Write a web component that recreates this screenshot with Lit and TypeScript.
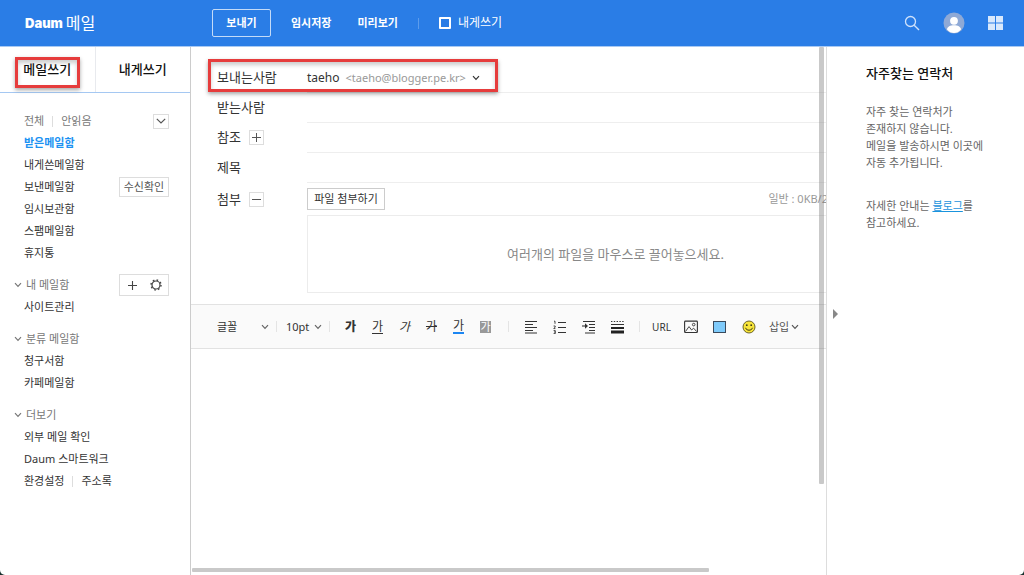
import { LitElement, html, css, svg } from "lit";
import { customElement, state } from "lit/decorators.js";

const chevron = html`<svg class="chev" width="8" height="6" viewBox="0 0 8 6" aria-hidden="true">
  <path d="M1 1.2 4 4.4 7 1.2" fill="none" stroke="currentColor" stroke-width="1.2" />
</svg>`;

const wideChevron = html`<svg width="10" height="6" viewBox="0 0 10 6" aria-hidden="true">
  <path d="M.8.8 5 5 9.200.8" fill="none" stroke="currentColor" stroke-width="1.2" />
</svg>`;

const icon = (body: unknown, w = 14, h = 14) =>
  html`<svg width=${w} height=${h} viewBox="0 0 ${w} ${h}" aria-hidden="true">${body}</svg>`;

const alignIcon = icon(svg`<path d="M1 1.5h12M1 4.5h8M1 7.5h12M1 10.5h8M1 13h12" stroke="#333" stroke-width="1.1"/>`);
const listIcon = icon(svg`<path d="M5 2.5h8M5 7.5h8M5 12.5h8" stroke="#333" stroke-width="1.1"/>
  <path d="M1 1.2h1v2.6M.6 6h1.6v1L.8 8.6h1.6M.6 10.6h1.7v3H.6M1 12h1.2" fill="none" stroke="#333" stroke-width=".9"/>`);
const indentIcon = icon(svg`<path d="M1 1.5h12M7 4.5h6M7 7.5h6M7 10.5h6M3 13h10" stroke="#333" stroke-width="1.1"/>
  <path d="M0 6h4" stroke="#333" stroke-width="1.1"/><path d="M3 3.2 6 6 3 8.8z" fill="#333"/>`);
const ruleIcon = icon(svg`<path d="M1 1.5h13" stroke="#333" stroke-width="1" stroke-dasharray="1.4 1.4"/>
  <path d="M1 4.5h13" stroke="#333" stroke-width="1"/><path d="M1 8h13" stroke="#222" stroke-width="2"/>
  <path d="M1 12h13" stroke="#222" stroke-width="3"/>`, 15, 14);
const imageIcon = icon(svg`<rect x=".6" y="1.1" width="12.8" height="11.4" rx=".8" fill="none" stroke="#333" stroke-width="1.1"/>
  <circle cx="9.7" cy="4.6" r="1.3" fill="none" stroke="#333" stroke-width=".9"/>
  <path d="M1.5 11.5 5 6.6 7.6 10 9.6 8.2 12.6 11.5" fill="none" stroke="#333" stroke-width=".9"/>`);
const boxIcon = icon(svg`<rect x=".5" y="1.5" width="12" height="11" fill="#7fcbfb" stroke="#3a4a5c"/>`, 13, 14);
const smileIcon = icon(svg`<circle cx="7" cy="7" r="6" fill="#f8e53a" stroke="#5b5520" stroke-width=".9"/>
  <circle cx="4.8" cy="5.2" r=".9" fill="#3d3a16"/><circle cx="9.2" cy="5.2" r=".9" fill="#3d3a16"/>
  <path d="M3.5 7.8c1 3.2 6 3.2 7 0" fill="none" stroke="#3d3a16" stroke-width="1"/>`);

@customElement("app-root")
export class AppRoot extends LitElement {
  @state() private toMe = false;

  static styles = css`
    :host {
      display: block;
      height: 100vh;
      background: #16302c;
      color: #333;
      font: 11px/22px "Noto Sans", "Noto Sans CJK KR", sans-serif;
    }
    * { box-sizing: border-box; }
    button, input, select {
      font: inherit;
      color: inherit;
      background: none;
      border: 0;
      padding: 0;
      margin: 0;
      border-radius: 0;
    }
    button { cursor: pointer; white-space: nowrap; }
    a { color: inherit; text-decoration: none; }
    svg { display: block; flex: none; }
    .page {
      height: 100%;
      display: flex;
      flex-direction: column;
      background: #fff;
      border-radius: 0 0 5px 5px;
      overflow: hidden;
    }
    .top {
      flex: none;
      height: 47px;
      display: flex;
      align-items: center;
      background: #2a7de6;
      border-bottom: 1px solid #a8c9f3;
      color: #fff;
    }
    .brand {
      flex: none;
      width: 212px;
      padding-left: 25px;
      display: flex;
      align-items: center;
      gap: 3px;
      font-size: 16px;
    }
    .logo { font: 900 13px/22px Inter, sans-serif; }
    .actions { display: flex; align-items: center; gap: 20px; font-weight: 700; flex: 1; }
    .send { width: 59px; height: 28px; border: 1px solid #c4dbf8; border-radius: 2px; }
    .preview { margin-left: 6px; }
    .bar { width: 1px; height: 11px; background: #5c9cec; flex: none; }
    .tome { display: flex; align-items: center; gap: 7px; font-weight: 400; font-size: 12px; }
    .tome input {
      appearance: none;
      width: 12px;
      height: 12px;
      border: 2px solid #fff;
      border-radius: 1px;
    }
    .tome input:checked { background: #bcd6f8; }
    .tools { display: flex; align-items: center; gap: 23px; padding-right: 21px; }
    .body { flex: 1; min-height: 0; display: flex; }

    .side { flex: none; width: 191px; border-right: 1px solid #ccc; }
    .tabs { display: flex; height: 46px; border-bottom: 1px solid #a5c8f2; }
    .tab {
      position: relative;
      flex: 1;
      padding-bottom: 2px;
      font-size: 13px;
      font-weight: 500;
      color: #111;
    }
    .tab + .tab { border-left: 1px solid #e8eaee; }
    .mark {
      position: absolute;
      border: 3px solid #e63c3c;
      box-shadow: 0 2px 4px rgba(0, 0, 0, 0.35), inset 0 3px 4px rgba(0, 0, 0, 0.2);
      pointer-events: none;
    }
    .mark-tab { inset: 10px 15px 4px; }
    .mark-from { inset: -4px auto 1px -9px; width: 290px; }
    .folders { padding: 17px 21px 0 24px; }
    .row { display: flex; align-items: center; height: 22px; }
    .row .bar { background: #ddd; margin: 0 8px; }
    .push { margin-left: auto; }
    .muted { color: #777; }
    .on { color: #1c92f2; font-weight: 700; }
    .group { margin-top: 10px; }
    .head { margin-left: -10px; gap: 4px; color: #777; }
    .box { border: 1px solid #ddd; display: flex; align-items: center; justify-content: center; color: #555; }
    .more { width: 16px; height: 15px; }
    .check { width: 50px; height: 20px; }
    .pair { width: 50px; height: 22px; justify-content: space-around; }
    .pair button { flex: 1; display: flex; justify-content: center; }

    .main { position: relative; flex: 1; min-width: 0; overflow: hidden; }
    .form { padding: 16px 0 11px 26px; font-size: 13px; }
    .field { position: relative; display: flex; height: 30px; }
    .label { flex: none; width: 90px; height: 28px; display: flex; align-items: center; gap: 8px; }
    .entry { flex: 1; min-width: 0; display: flex; align-items: center; border-bottom: 1px solid #eee; }
    .entry input { width: 100%; height: 28px; outline: none; }
    .from { display: flex; align-items: center; gap: 6px; font-size: 12px; }
    .addr { color: #999; font-size: 11px; }
    .attach { height: 32px; }
    .attach .label { height: 32px; }
    .attach .entry { border: 0; white-space: nowrap; }
    .file { flex: none; width: 78px; height: 22px; border: 1px solid #ccc; line-height: 18px; font-size: 11px; }
    .size { margin-left: auto; margin-right: -2px; color: #999; font-size: 11px; }
    .drop {
      margin-left: 90px;
      margin-right: -98px;
      height: 78px;
      border: 1px solid #ececec;
      display: flex;
      align-items: center;
      justify-content: center;
      color: #888;
      font-size: 13px;
    }
    .sq { width: 15px; height: 15px; }
    .bar-edit {
      display: flex;
      align-items: center;
      height: 45px;
      padding-left: 26px;
      background: #fafafa;
      border-top: 1px solid #e2e2e2;
      border-bottom: 1px solid #e2e2e2;
      color: #333;
    }
    .bar-edit .bar { background: #e4e4e4; margin: 0 7px; }
    .pick { position: relative; display: flex; align-items: center; }
    .pick select { appearance: none; width: 100%; outline: none; }
    .pick .chev { position: absolute; right: 0; pointer-events: none; color: #666; }
    .font { width: 52px; }
    .pt { width: 36px; margin-left: 2px; }
    .marks { display: flex; margin-right: 2px; }
    .t { flex: none; width: 27px; height: 24px; display: flex; align-items: center; justify-content: center; }
    .w { width: 29px; }
    .g { font-size: 12px; line-height: 13px; }
    .bold { font-weight: 900; }
    .under { border-bottom: 1px solid #333; }
    .ital { font-style: italic; }
    .strike { text-decoration: line-through; }
    .tint { border-bottom: 2px solid #1c86f2; }
    .fill { background: #999; color: #fff; font-size: 11px; line-height: 12px; }
    .url { font: 10px/22px "Noto Sans", sans-serif; }
    .insert { display: flex; align-items: center; gap: 2px; margin-left: 6px; color: #555; }
    .vbar, .hbar { position: absolute; background: rgba(120, 120, 120, 0.4); border-radius: 1px; }
    .vbar { top: 0; right: 2px; width: 5px; bottom: 91px; }
    .hbar { left: 1px; right: 117px; bottom: 3px; height: 4px; }

    .contacts {
      position: relative;
      flex: none;
      width: 198px;
      padding: 15px 30px 0 39px;
      border-left: 1px solid #ddd;
      line-height: 17px;
      color: #666;
    }
    .contacts h2 { margin: 0 0 19px; font-size: 13px; line-height: 22px; font-weight: 500; color: #111; }
    .contacts p { margin: 0 0 26px; white-space: nowrap; }
    .contacts a { color: #1a94dd; text-decoration: underline; }
    .fold { position: absolute; left: 6px; top: 262px; }
  `;

  render() {
    return html`<div class="page">
      <header class="top">
        <div class="brand"><span class="logo">Daum</span><span>메일</span></div>
        <div class="actions">
          <button class="send">보내기</button>
          <button>임시저장</button>
          <button class="preview">미리보기</button>
          <span class="bar"></span>
          <label class="tome"><input type="checkbox" .checked=${this.toMe}
            @change=${() => (this.toMe = !this.toMe)} />내게쓰기</label>
        </div>
        <div class="tools">
          <button aria-label="검색">${icon(svg`<circle cx="6.5" cy="6.5" r="5" fill="none" stroke="#cfe2fb" stroke-width="1.3"/>
            <path d="M10.2 10.2 15 15" stroke="#cfe2fb" stroke-width="1.4"/>`, 16, 16)}</button>
          <button aria-label="내 계정">${icon(svg`<circle cx="11" cy="11" r="10.5" fill="#8ea9d6"/>
            <circle cx="11" cy="8.8" r="3.9" fill="#fff"/>
            <path d="M4 17.500c0-5.800 14-5.800 14 0-3.600 4.800-10.400 4.800-14 0z" fill="#fff"/>`, 22, 22)}</button>
          <button aria-label="서비스">${icon(svg`<path d="M0 0h7v6.500H0zM8 0h7v6.500H8zM0 7.500h7V14H0zM8 7.500h7V14H8z" fill="#d8e8fc"/>`, 15, 14)}</button>
        </div>
      </header>

      <div class="body">
        <aside class="side">
          <div class="tabs">
            <button class="tab">메일쓰기<span class="mark mark-tab"></span></button>
            <button class="tab">내게쓰기</button>
          </div>
          <nav class="folders">
            <div class="row muted"><a href="#">전체</a><span class="bar"></span><a href="#">안읽음</a>
              <button class="box more push" aria-label="더보기">${wideChevron}</button></div>
            <div class="row"><a class="on" href="#">받은메일함</a></div>
            <div class="row"><a href="#">내게쓴메일함</a></div>
            <div class="row"><a href="#">보낸메일함</a><button class="box check push">수신확인</button></div>
            <div class="row"><a href="#">임시보관함</a></div>
            <div class="row"><a href="#">스팸메일함</a></div>
            <div class="row"><a href="#">휴지통</a></div>
            <div class="group">
              <div class="row head">${chevron}<span>내 메일함</span>
                <span class="box pair push">
                  <button aria-label="추가">${icon(svg`<path d="M5.500 1v9M1 5.500h9" stroke="#444" stroke-width="1.1"/>`, 11, 11)}</button>
                  <button aria-label="설정">${icon(svg`<circle cx="6" cy="6" r="4" fill="none" stroke="#444" stroke-width="1.200"/>
                    <circle cx="6" cy="6" r="5" fill="none" stroke="#444" stroke-width="1.400" stroke-dasharray="1.600 2.327"/>`, 12, 12)}</button>
                </span></div>
              <div class="row"><a href="#">사이트관리</a></div>
            </div>
            <div class="group">
              <div class="row head">${chevron}<span>분류 메일함</span></div>
              <div class="row"><a href="#">청구서함</a></div>
              <div class="row"><a href="#">카페메일함</a></div>
            </div>
            <div class="group">
              <div class="row head">${chevron}<span>더보기</span></div>
              <div class="row"><a href="#">외부 메일 확인</a></div>
              <div class="row"><a href="#">Daum 스마트워크</a></div>
              <div class="row"><a href="#">환경설정</a><span class="bar"></span><a href="#">주소록</a></div>
            </div>
          </nav>
        </aside>

        <main class="main">
          <div class="form">
            <div class="field"><span class="label">보내는사람</span>
              <div class="entry"><button class="from">taeho <span class="addr">&lt;taeho@blogger.pe.kr&gt;</span>${chevron}</button></div>
              <span class="mark mark-from"></span></div>
            <div class="field"><label class="label" for="to">받는사람</label>
              <div class="entry"><input id="to" type="text" /></div></div>
            <div class="field"><div class="label"><label for="cc">참조</label>
                <button class="box sq" aria-label="펼치기">${icon(svg`<path d="M4.500 0v9M0 4.500h9" stroke="#555"/>`, 9, 9)}</button></div>
              <div class="entry"><input id="cc" type="text" /></div></div>
            <div class="field"><label class="label" for="subject">제목</label>
              <div class="entry"><input id="subject" type="text" /></div></div>
            <div class="field attach"><div class="label"><span>첨부</span>
                <button class="box sq" aria-label="접기">${icon(svg`<path d="M0 4.500h9" stroke="#555"/>`, 9, 9)}</button></div>
              <div class="entry"><button class="file">파일 첨부하기</button><span class="size">일반 : 0KB/2</span></div></div>
            <div class="drop">여러개의 파일을 마우스로 끌어놓으세요.</div>
          </div>

          <div class="bar-edit">
            <label class="pick font"><select aria-label="글꼴"><option>글꼴</option></select>${chevron}</label>
            <span class="bar"></span>
            <label class="pick pt"><select aria-label="크기"><option>10pt</option></select>${chevron}</label>
            <span class="bar"></span>
            <div class="marks">
              <button class="t"><span class="g bold">가</span></button>
              <button class="t"><span class="g under">가</span></button>
              <button class="t"><span class="g ital">가</span></button>
              <button class="t"><span class="g strike">가</span></button>
              <button class="t"><span class="g tint">가</span></button>
              <button class="t"><span class="g fill">가</span></button>
            </div>
            <span class="bar"></span>
            <button class="t w" aria-label="정렬">${alignIcon}</button>
            <button class="t w" aria-label="목록">${listIcon}</button>
            <button class="t w" aria-label="들여쓰기">${indentIcon}</button>
            <button class="t w" aria-label="구분선">${ruleIcon}</button>
            <span class="bar"></span>
            <button class="t w url">URL</button>
            <button class="t w" aria-label="사진">${imageIcon}</button>
            <button class="t w" aria-label="배경">${boxIcon}</button>
            <button class="t w" aria-label="이모티콘">${smileIcon}</button>
            <button class="insert">삽입${chevron}</button>
          </div>
          <div class="vbar"></div>
          <div class="hbar"></div>
        </main>

        <aside class="contacts">
          <button class="fold" aria-label="접기">${icon(svg`<path d="M0 0 5 5 0 10z" fill="#888"/>`, 5, 10)}</button>
          <h2>자주찾는 연락처</h2>
          <p>자주 찾는 연락처가<br />존재하지 않습니다.<br />메일을 발송하시면 이곳에<br />자동 추가됩니다.</p>
          <p>자세한 안내는 <a href="#">블로그</a>를<br />참고하세요.</p>
        </aside>
      </div>
    </div>`;
  }
}
